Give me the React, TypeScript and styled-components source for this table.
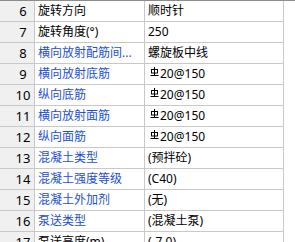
import React from "react";
import styled, { createGlobalStyle } from "styled-components";

interface PropRow {
  no: number;
  name: string;
  value: string;
  linked?: boolean;
  rebar?: boolean;
}

const rows: PropRow[] = [
  { no: 6, name: "旋转方向", value: "顺时针" },
  { no: 7, name: "旋转角度(°)", value: "250" },
  { no: 8, name: "横向放射配筋间...", value: "螺旋板中线", linked: true },
  { no: 9, name: "横向放射底筋", value: "20@150", linked: true, rebar: true },
  { no: 10, name: "纵向底筋", value: "20@150", linked: true, rebar: true },
  { no: 11, name: "横向放射面筋", value: "20@150", linked: true, rebar: true },
  { no: 12, name: "纵向面筋", value: "20@150", linked: true, rebar: true },
  { no: 13, name: "混凝土类型", value: "(预拌砼)", linked: true },
  { no: 14, name: "混凝土强度等级", value: "(C40)", linked: true },
  { no: 15, name: "混凝土外加剂", value: "(无)", linked: true },
  { no: 16, name: "泵送类型", value: "(混凝土泵)", linked: true },
  { no: 17, name: "泵送高度(m)", value: "(-7.0)" },
];

const GlobalStyle = createGlobalStyle`
  html, body {
    margin: 0;
    padding: 0;
    background: #fff;
  }
  body {
    font-family: "Noto Sans", "Noto Sans CJK SC", sans-serif;
    overflow: hidden;
  }
`;

// 三级钢筋符号
const RebarMark = () => (
  <RebarSvg width="9" height="10" viewBox="0 0 9 10">
    <line x1="4.5" y1="0" x2="4.5" y2="8.5" stroke="#000" strokeWidth="1" />
    <rect x="1.5" y="2.5" width="6" height="3.5" fill="none" stroke="#000" strokeWidth="1" />
    <line x1="0.5" y1="8.5" x2="8.5" y2="8.5" stroke="#000" strokeWidth="1" />
  </RebarSvg>
);

const App: React.FC = () => {
  return (
    <>
      <GlobalStyle />
      <Grid>
        {rows.map((row) => (
          <Row key={row.no}>
            <NoCell>{row.no}</NoCell>
            <NameCell $linked={row.linked}>{row.name}</NameCell>
            <ValueCell>
              {row.rebar && <RebarMark />}
              {row.value}
            </ValueCell>
          </Row>
        ))}
      </Grid>
    </>
  );
};
export default App;

const Grid = styled.div`
  width: 295px;
  border-top: 1px solid #8c8c8c;
`;

const Row = styled.div`
  display: grid;
  grid-template-columns: 34px 109px 138px;
  column-gap: 1px;
  width: 283px;
  height: 20px;
  background-color: #c8c8c8;
  border-bottom: 1px solid #c8c8c8;
  border-right: 1px solid #c8c8c8;
`;

const NoCell = styled.div`
  background-color: #f0f0f0;
  color: #000;
  font-size: 13px;
  line-height: 20px;
  padding-left: 12px;
  text-align: center;
`;

const NameCell = styled.div<{ $linked?: boolean }>`
  background-color: #fff;
  color: ${(p) => (p.$linked ? "#1d4fd6" : "#000")};
  font-size: 12px;
  line-height: 20px;
  padding-left: 3px;
  white-space: nowrap;
  overflow: hidden;
`;

const ValueCell = styled.div`
  background-color: #fff;
  color: #000;
  font-size: 12px;
  line-height: 20px;
  padding-left: 3px;
  white-space: nowrap;
  overflow: hidden;
  display: flex;
  align-items: center;
`;

const RebarSvg = styled.svg`
  margin: -5px 1px 0 2px;
  flex-shrink: 0;
`;
